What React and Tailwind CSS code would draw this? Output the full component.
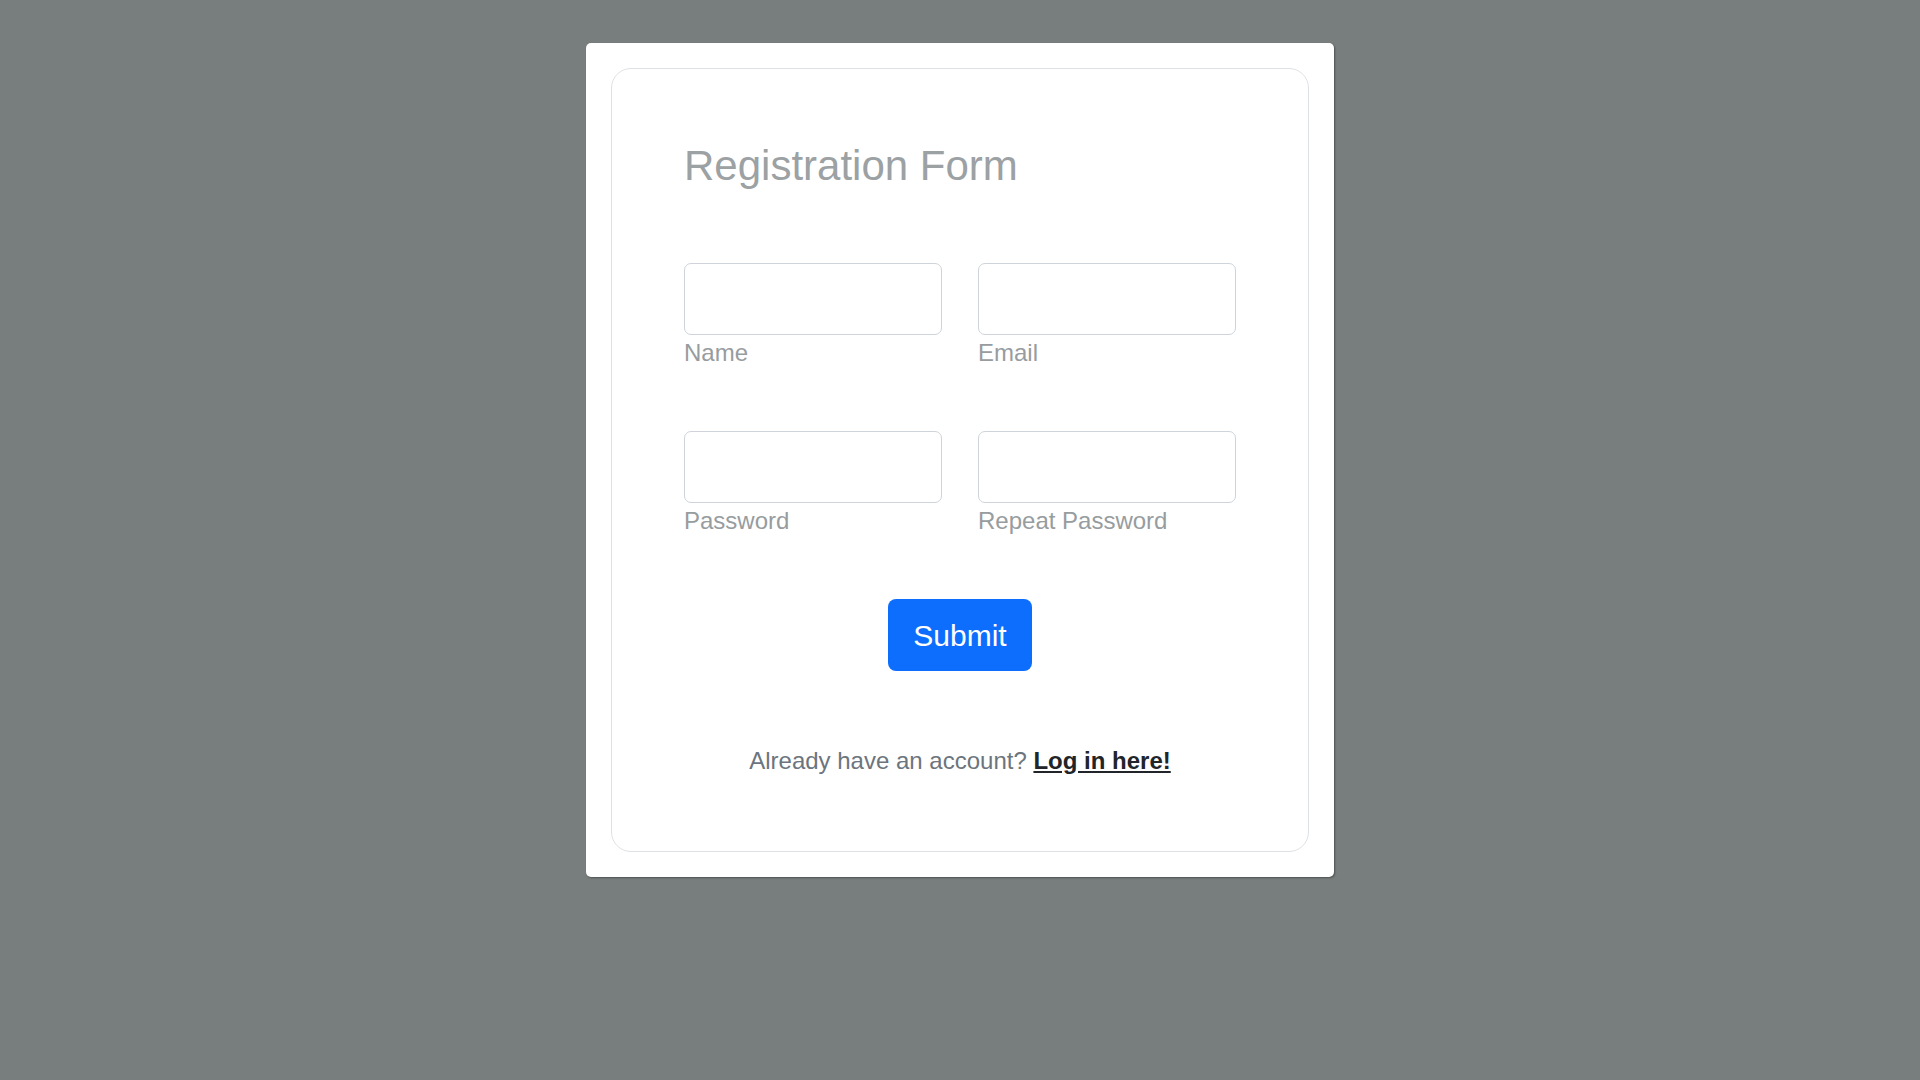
export default function App() {
  const font = { fontFamily: '"Liberation Sans", Arial, sans-serif' };
  const Field = ({ label, type }) => (
    <div className="flex flex-col">
      <input
        type={type}
        className="h-[72px] w-full rounded-[7px] border border-[#ced4da] bg-white outline-none"
      />
      <label className="text-[24px] leading-[36px] text-[#979c9f]">{label}</label>
    </div>
  );
  return (
    <div className="min-h-screen w-full bg-[#787d7d] pt-[43px]" style={font}>
      <div className="mx-auto w-[748px] rounded-[5px] bg-white p-[25px] shadow-[1px_1px_2px_rgba(0,0,0,0.35)]">
        <div className="rounded-[20px] border border-[#dee2e6] px-[72px] pt-[72px] pb-[72px]">
          <h2 className="mb-[72px] text-[42px] leading-[50px] font-normal text-[#9ca1a4]">
            Registration Form
          </h2>
          <div className="grid grid-cols-2 gap-x-[36px] gap-y-[60px]">
            <Field label="Name" type="text" />
            <Field label="Email" type="email" />
            <Field label="Password" type="password" />
            <Field label="Repeat Password" type="password" />
          </div>
          <div className="mt-[60px] flex justify-center">
            <button className="h-[72px] w-[144px] rounded-[8px] bg-[#0d6efd] text-[30px] text-white">
              Submit
            </button>
          </div>
          <p className="mt-[72px] text-center text-[24px] leading-[36px] text-[#6c757d]">
            Already have an account?{" "}
            <a href="#" className="font-bold text-[#212529] underline">
              Log in here!
            </a>
          </p>
        </div>
      </div>
    </div>
  );
}
